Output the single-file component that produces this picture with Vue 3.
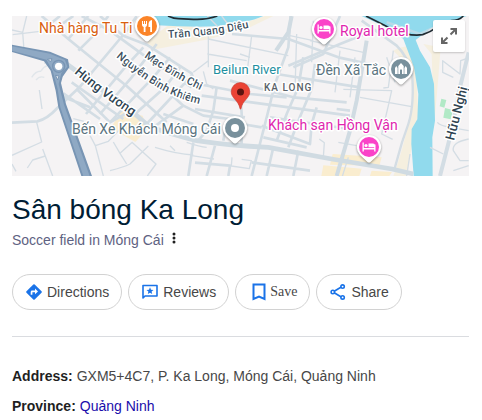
<script setup>
  import { ref } from "vue"

  const place = {
    name: "Sân bóng Ka Long",
    category: "Soccer field in Móng Cái",
    address: "GXM5+4C7, P. Ka Long, Móng Cái, Quảng Ninh",
    province: "Quảng Ninh"
  }

  const pins = [
    { x: 135, y: 10, color: "#fb8428", icon: "food" },
    { x: 312, y: 13, color: "#fa43c8", icon: "bed" },
    { x: 389, y: 53, color: "#78909c", icon: "temple" },
    { x: 223, y: 112, color: "#78909c", icon: "dot" },
    { x: 357, y: 131, color: "#fa43c8", icon: "bed" }
  ]

  const labels = [
    { text: "Nhà hàng Tu Ti", x: 27, y: 17, type: "food" },
    { text: "Royal hotel", x: 328, y: 20, type: "hotel" },
    { text: "Đền Xã Tắc", x: 304, y: 59, type: "sight" },
    { text: "Bến Xe Khách Móng Cái", x: 60, y: 118, type: "sight" },
    { text: "Khách sạn Hồng Vận", x: 256, y: 114, type: "hotel" },
    { text: "Beilun River", x: 201, y: 58, type: "river" },
    { text: "KA LONG", x: 252, y: 75, type: "area" }
  ]

  const saved = ref(false)
</script>

<template>
  <main class="panel">
    <div class="map">
      <svg class="map-art" viewBox="0 0 457 160" preserveAspectRatio="xMidYMid slice" role="img" aria-label="Map">
        <defs>
          <path id="tran" d="M156 22 Q200 20 236 12 L256 7" />
          <path id="mac" d="M132 41 Q158 60 188 74 L206 82" />
          <path id="nguyen" d="M104 41 Q136 68 158 78 Q174 85 188 88 L206 91" />
          <path id="hung" d="M62 57 Q88 79 117 98 L134 109" />
          <path id="huu" d="M442 125 L459 58" />
        </defs>
        <rect width="457" height="160" fill="#f5f3f4" />

        <!-- land and roads, drawn on a grid of a third of a pixel -->
        <g transform="scale(.33333) translate(-6 -6)" fill="none" stroke-linejoin="round">
          <g fill="#f5efdf">
            <path d="M420 75 L480 30 L640 48 L765 6 L790 6 L720 40 L600 75 L440 105 L412 88Z" />
            <path d="M1150 110 Q1180 92 1215 98 L1225 300 L1205 400 L1190 486 L1150 486 Q1195 360 1205 260 Q1210 200 1190 150Z" />
            <path d="M1240 90 L1292 100 L1285 190 L1272 340 L1265 120Z" />
          </g>
          <g fill="#faedcf">
            <path d="M335 290 L398 305 L412 345 L376 384 L302 342Z" />
            <path d="M968 420 L1115 430 L1108 455 L960 452Z M940 454 L1055 464 L1048 486 L934 486Z M1085 470 L1146 474 L1138 486 L1080 486Z" />
          </g>
          <path fill="#91daed" d="M430 6 H760 Q735 18 700 23 L620 37 Q540 40 440 34Z" />
          <path fill="#91daed" d="M1055 6 H1370 L1330 20 Q1290 25 1260 45 L1217 78 L1230 110 L1260 160 L1272 210 L1275 320 L1267 370 L1268 486 L1211 486 L1204 390 L1205 345 L1222 316 L1225 240 L1212 160 L1180 75 L1140 44Z" />
          <path fill="#b1e9c6" d="M1294 254 l15 4 -6 23 -14 -4Z M1305 282 l24 6 -7 28 -22 -5Z" />

          <g stroke="#d4dde4" stroke-width="4">
            <path d="M50 6 L38 55 L42 108 M8 62 L90 52 M38 55 L6 48" />
            <path d="M112 120 L104 150 M112 155 Q100 158 94 170 M65 190 Q78 170 94 172 M78 198 Q88 185 103 190" stroke="#e1e6ea" />
            <path d="M88 228 L96 285 M80 325 L95 384 L6 424 M98 405 L128 486 M106 426 L68 438 L52 462 M6 450 L18 472" />
            <path d="M190 314 L222 322 M222 330 L256 395 L280 486 M256 395 L295 382 L340 335 M310 384 L330 418 L365 386 M330 418 L350 450 M300 470 Q340 460 360 450 L415 396 M365 384 L438 450 L412 486 M435 400 Q500 420 550 423" />
            <path d="M480 395 L495 410 M545 425 Q580 430 612 435 M530 385 Q570 398 590 400" />
            <path d="M595 65 L595 160 M595 75 L835 125 M592 120 L710 140 M550 175 L595 140 M725 65 L710 185 M580 172 L590 210 L610 225 M592 6 L635 50 L690 45 M635 6 L665 45" />
            <path d="M666 430 L664 456 L718 464 L724 440 L695 436 M690 120 L720 130" />
            <path d="M860 60 L855 230 M910 20 L905 145 M900 80 L1060 115 M840 65 L910 80 M990 110 L975 235 M1035 130 L1020 250 M1000 226 L1145 230 L1135 275 L1115 360 L1148 376 M1150 110 L1135 220 L1120 222 M1050 250 L1205 278 M1130 130 L1155 205" />
            <path d="M928 375 L943 386 L940 430 M985 385 L1040 395 M996 490 L1015 430 M1190 486 L1200 420" />
            <path d="M1205 160 Q1215 270 1195 330 L1176 385 L1152 470" stroke-width="7" />
            <path d="M1282 325 Q1290 335 1320 340 L1376 350 M1376 375 Q1325 385 1330 410 L1350 440 L1376 440 M1260 400 L1300 420 M1330 190 L1298 175 L1298 140 L1350 180 L1352 140 L1375 132 M1376 455 L1330 470" />
          </g>

          <g stroke="#d3dde4" stroke-width="8">
            <path d="M6 326 L82 322 Q112 315 142 282 L210 218 L342 60" />
            <path d="M95 6 L175 75 L245 132 L350 216 L470 325" />
            <path d="M145 38 L190 6 M175 75 L235 6 M120 30 L150 6" />
            <path d="M215 6 L300 50 L410 130 L545 220" />
            <path d="M270 6 L340 65 L410 92 L545 178 L548 192" />
            <path d="M295 6 L245 70 L205 110 M380 6 L342 62 M440 90 L365 190 L270 300 M400 100 L345 160 L228 300" />
            <path d="M480 130 L430 190 L300 325 M510 160 L465 220 L375 300 M548 182 L410 330" />
            <path d="M185 205 L340 315 M150 245 L240 280 M200 225 L300 325 L345 300 M160 238 L270 315" />
            <path d="M465 225 L520 275 L430 340 M565 210 L720 240 L830 250 M575 245 L1020 305 M460 300 L550 330 M555 285 L705 310" />
            <path d="M620 220 L610 290 L590 350 L560 385 M690 215 L695 300 L695 400 M650 320 L640 380" />
            <path d="M520 275 L580 305 L660 315 M660 200 L680 205 L850 250 L1010 265" />
            <path d="M842 6 L835 100 L795 210 L765 330 L725 486 M880 130 L865 220 L830 300 L800 380 M915 150 L905 225 L865 320 L835 400" />
            <path d="M780 310 L1020 345 M755 335 L900 390 L905 330 L920 280 M695 330 L755 340 M760 370 L890 400 M980 285 L1020 290" />
            <path d="M550 385 L535 486 M615 395 L590 486 M555 446 L660 455 L655 486 M725 445 L900 470 M790 400 L770 486 M865 410 L850 486" />
            <path d="M666 60 L835 75 L985 130 L1100 155 M990 6 L940 120 L850 160" />
            <path d="M835 155 L990 90 L1065 60 M800 180 L1050 220 M1055 20 L1160 95 Q1195 130 1202 175" />
            <path d="M1376 115 L1350 220 L1325 350 L1290 486" stroke-width="12" />
          </g>

          <g stroke="#d0dbe2" stroke-width="14">
            <path d="M170 150 L375 300 L418 338 Q500 365 560 380 Q660 395 775 400 L965 435 L1146 465 L1210 480" />
            <path d="M845 6 L835 55 L798 110 M1070 80 L1040 260 L1020 350 L980 486" stroke-width="12" />
            <path d="M1130 25 L1230 60 L1270 42" stroke-width="8" opacity=".6" />
          </g>
          <g stroke="#202c33" stroke-width="5" fill="none">
            <path d="M474 6 Q490 14 505 14 L550 16 Q590 18 622 6" />
            <path d="M1068 6 L1150 47 Q1200 68 1238 62 Q1260 55 1280 40 Q1305 22 1325 20 Q1348 19 1360 6" />
          </g>

          <path fill="#7895b4" d="M6 92 L120 113 L174 136 L178 160 L158 188 L153 207 L168 270 L246 486 H214 L145 280 L137 230 L122 170 L102 142 L6 114Z" />
          <path fill="#8fa9c4" d="M6 97 L120 119 L165 138 L172 158 L154 178 L146 210 L162 272 L239 486 H220 L151 280 L143 225 L128 170 L109 137 L6 110Z" />
          <circle cx="146" cy="157" r="18" fill="#8fa9c4" stroke="#7895b4" stroke-width="4" />
          <circle cx="146" cy="157" r="11" fill="#fff" />
          <path fill="#dfe6ec" stroke="#7895b4" stroke-width="3" d="M112 136 l14 -2 -4 9Z M136 184 l11 2 -4 12Z" />
        </g>

        <g class="street">
          <text><textPath href="#tran">Trần Quang Diệu</textPath></text>
          <text><textPath href="#mac">Mạc Đĩnh Chi</textPath></text>
          <text><textPath href="#nguyen">Nguyễn Bỉnh Khiêm</textPath></text>
          <text class="wide"><textPath href="#hung">Hùng Vương</textPath></text>
          <text class="wide"><textPath href="#huu">Hữu Nghị</textPath></text>
        </g>

        <text v-for="label in labels" :key="label.text" :x="label.x" :y="label.y" :class="label.type">{{ label.text }}</text>

        <g v-for="(pin, ind) in pins" :key="ind" :transform="`translate(${pin.x} ${pin.y})`">
          <path class="pin-edge" d="M0 -12 A12 12 0 0 1 9 8 L1.500 15 Q0 16 -1.500 15 L-9 8 A12 12 0 0 1 0 -12Z" />
          <circle r="10" :fill="pin.color" />
          <g v-if="pin.icon === 'food'" fill="#fff">
            <path d="M-5 -5 h1 v3 h1 v-3 h1 v3 h1 v-3 h1 v4 q0 1.500 -1.500 2 V6 h-1.800 V1 Q-5 .5 -5 -1Z" />
            <path d="M5 -6 V6 H3.200 V1 H1.500 V-2 Q1.700 -5.500 5 -6Z" />
          </g>
          <g v-else-if="pin.icon === 'bed'" fill="#fff">
            <path d="M-6.500 -4.500 h1.300 V1 H5.200 V-2.500 H6.500 V4.500 H5.200 V2.500 H-5.200 V4.500 H-6.500Z" />
            <path d="M-.5 -3.500 H4 Q6 -3.500 6 -1.500 V.3 H-.5Z" />
            <circle cx="-3" cy="-1.500" r="1.600" />
          </g>
          <g v-else-if="pin.icon === 'temple'" fill="#fff">
            <path d="M-6 5 V-1 l1.300 -2 1.300 2 V5Z M-2.700 5 V-3 L0 -6 L2.700 -3 V5 H1 V1 Q0 -.5 -1 1 V5Z M3.400 5 V-1 l1.300 -2 1.300 2 V5Z" />
          </g>
          <circle v-else r="4" fill="#fff" />
        </g>

        <path fill="#ea4335" stroke="#c5362b" stroke-width=".6" d="M228.500 66.500 A9.300 9.300 0 0 1 237.800 75.800 C237.800 82 230.500 84.500 229 92.500 Q228.500 94 228 92.500 C226.500 84.500 219.200 82 219.200 75.800 A9.300 9.300 0 0 1 228.500 66.500Z" />
        <circle cx="228.500" cy="76" r="3.500" fill="#5c1410" />
      </svg>
      <button class="expand" aria-label="Expand map">
        <svg width="18" height="18" viewBox="0 0 18 18" fill="none" stroke="#666" stroke-width="2">
          <path d="M10.500 7.500 L16 2 M10.500 2 H16 V7.500 M7.500 10.500 L2 16 M2 10.500 V16 H7.500" />
        </svg>
      </button>
    </div>

    <h1>{{ place.name }}</h1>
    <div class="category">
      <span>{{ place.category }}</span>
      <button class="more" aria-label="More options">
        <svg width="4" height="12" viewBox="0 0 4 12" fill="#1f1f1f">
          <circle cx="2" cy="2" r="1.500" />
          <circle cx="2" cy="6" r="1.500" />
          <circle cx="2" cy="10" r="1.500" />
        </svg>
      </button>
    </div>

    <div class="actions">
      <button>
        <svg width="16" height="16" viewBox="0 0 16 16">
          <path fill="#1a73e8" d="M7.300 .5 Q8 -.1 8.700 .5 L15.500 7.300 Q16.100 8 15.500 8.700 L8.700 15.500 Q8 16.100 7.300 15.500 L.5 8.700 Q-.1 8 .5 7.300Z" />
          <path fill="#fff" d="M4.700 10.700 V8 Q4.700 6.600 6.100 6.600 H9 V4.600 L12 7.500 L9 10.300 V8.300 H6.400 V10.700Z" />
        </svg>
        Directions
      </button>
      <button>
        <svg width="16" height="16" viewBox="0 0 16 16">
          <path fill="none" stroke="#1a73e8" stroke-width="1.600" stroke-linejoin="round" d="M1 14 V1.500 H15 V12 H3Z" />
          <path fill="#1a73e8" d="M8 3.300 L9 5.700 L11.500 5.900 L9.600 7.500 L10.200 10 L8 8.700 L5.800 10 L6.400 7.500 L4.500 5.900 L7 5.700Z" />
        </svg>
        Reviews
      </button>
      <button class="save" :aria-pressed="saved" @click="saved = !saved">
        <svg width="14" height="18" viewBox="0 0 14 18">
          <path fill="none" stroke="#1a73e8" stroke-width="2" d="M1.500 1.500 H12.500 V16 L7 13.500 L1.500 16Z" />
        </svg>
        Save
      </button>
      <button>
        <svg width="16" height="16" viewBox="0 0 16 16" fill="none" stroke="#1a73e8" stroke-width="1.600">
          <path d="M4.200 7.200 L11.300 3 M4.200 8.800 L11.300 13" />
          <circle cx="2.800" cy="8" r="1.700" />
          <circle cx="12.600" cy="2.600" r="1.700" />
          <circle cx="12.600" cy="13.400" r="1.700" />
        </svg>
        Share
      </button>
    </div>

    <dl class="facts">
      <div>
        <dt>Address:</dt>
        <dd>{{ place.address }}</dd>
      </div>
      <div>
        <dt>Province:</dt>
        <dd><a href="#">{{ place.province }}</a></dd>
      </div>
    </dl>
  </main>
</template>

<style>
  body {
    background: #fff;
  }
</style>

<style scoped>
  .panel {
    padding: 16px 13px 0 12px;
    font-family: "Liberation Sans", Arial, sans-serif;
    font-size: 14px;
    line-height: 20px;
    color: #474747;
  }

  button {
    font: inherit;
    color: inherit;
    background: #fff;
    border: none;
    padding: 0;
    cursor: pointer;
  }

  .map {
    position: relative;
  }

  .map-art {
    display: block;
    width: 100%;
    height: 160px;
    font-family: Roboto, sans-serif;
    font-size: 14px;
  }

  .map-art text {
    paint-order: stroke;
    stroke: #fff;
    stroke-width: 3px;
    stroke-linejoin: round;
  }

  .street {
    font-size: 11px;
    font-weight: 500;
    fill: #3c5060;
  }

  .street .wide {
    font-size: 13px;
    fill: #2f4351;
  }

  .food {
    fill: #d9600f;
  }

  .hotel {
    fill: #e026ae;
  }

  .sight {
    fill: #5b7480;
  }

  .river {
    font-size: 13px;
    fill: #1f8f9f;
  }

  .area {
    font-size: 10px;
    font-weight: 500;
    letter-spacing: 1px;
    fill: #5a6268;
  }

  .pin-edge {
    fill: #fff;
    filter: drop-shadow(0 1px 1px rgba(0, 0, 0, 0.4));
  }

  .expand {
    position: absolute;
    top: 4px;
    right: 4px;
    display: flex;
    align-items: center;
    justify-content: center;
    width: 32px;
    height: 32px;
    border-radius: 2px;
    box-shadow: 0 1px 2px rgba(0, 0, 0, 0.2);
  }

  h1 {
    margin: 16px 0 0;
    font-size: 28px;
    font-weight: 400;
    line-height: 36px;
    color: #001d35;
  }

  .category {
    display: flex;
    align-items: center;
    gap: 8px;
    margin-top: 2px;
    color: #5e6282;
  }

  .more {
    display: flex;
    padding-bottom: 4px;
  }

  .actions {
    display: flex;
    gap: 6px;
    margin-top: 24px;
  }

  .actions button {
    display: flex;
    align-items: center;
    gap: 5px;
    height: 36px;
    padding: 0 12px 0 13px;
    border: 1px solid #d2d2d2;
    border-radius: 18px;
    white-space: nowrap;
  }

  .actions .save {
    padding: 0 12px 0 16px;
    gap: 4px;
    font-family: "Liberation Serif", "Times New Roman", serif;
  }

  .facts {
    margin: 26px 0 0;
    padding-top: 29px;
    border-top: 1px solid #dadce0;
  }

  .facts div {
    display: flex;
    gap: 4px;
    margin-bottom: 10px;
  }

  dt {
    font-weight: 700;
    color: #1f1f1f;
  }

  dd {
    margin: 0;
  }

  a {
    color: #1a0dab;
    text-decoration: none;
  }
</style>
